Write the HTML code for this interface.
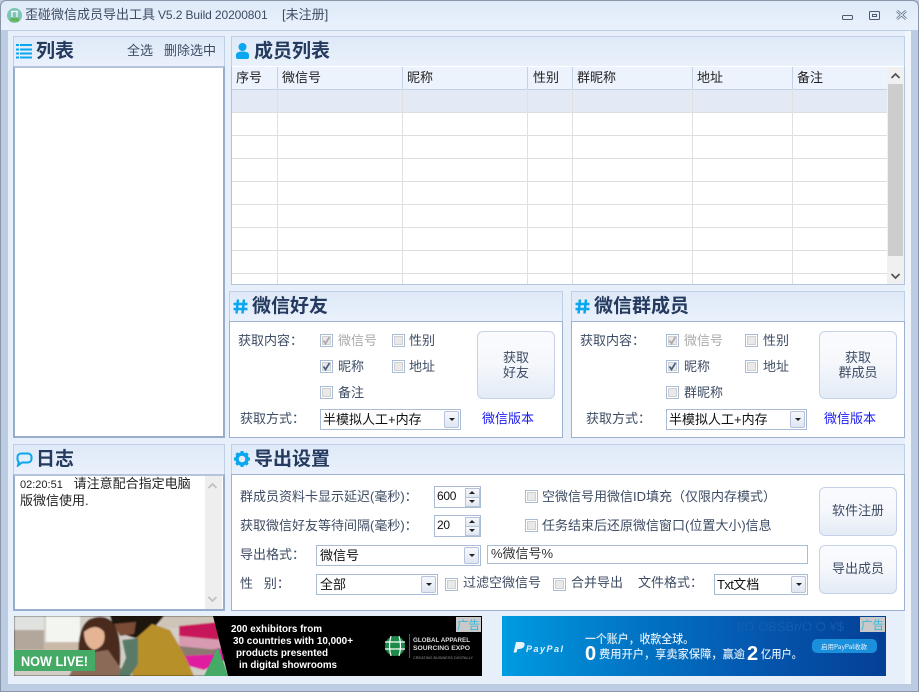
<!DOCTYPE html>
<html><head><meta charset="utf-8">
<style>
html,body{margin:0;padding:0}
body{width:919px;height:692px;overflow:hidden;position:relative;background:#bccde3;font-family:"Liberation Sans","Noto Sans CJK SC",sans-serif;font-size:13px;color:#3d4c63}
div,span,svg{position:absolute;box-sizing:border-box}
span.i{position:static}
.t{white-space:nowrap;line-height:18px;height:18px}
.h{font-size:19px;font-weight:700;color:#243a5e;line-height:28px;height:28px;white-space:nowrap}
.ph{background:linear-gradient(#dfe9f7,#e9f1fc);border:1px solid #bfcfe6}
.pb{background:#fff;border:1px solid #9db0cf}
.b{background:linear-gradient(#fafbfe 0%,#f6f8fc 45%,#e3ebf6 100%);border:1px solid #c5d2e8;border-radius:6px;text-align:center;color:#3d4c63;line-height:15px}
.c{width:13px;height:13px;border:1px solid #aabbd6;background:#fff}
.c:after{content:"";position:absolute;left:1px;top:1px;width:9px;height:9px;background:#e9e9e9;border:1px solid #d0d0d0;box-sizing:border-box}
.c svg{left:0;top:0;z-index:2}
.s{background:#fff;border:1px solid #aabbd6;color:#111;line-height:19px;padding-left:2px;white-space:nowrap}
.d{right:1px;top:1px;width:15px;height:17px;background:linear-gradient(#f6f8fc,#dfe6f2);border:1px solid #b6c3da;border-radius:2px}
.d:after{content:"";position:absolute;left:4px;top:6px;border-left:3px solid transparent;border-right:3px solid transparent;border-top:3px solid #222}
.col{top:67px;width:1px;height:217px;background:#e0e0e0}
.hc{top:67px;width:1px;height:22px;background:#c3d0e6}
.row{left:232px;width:655px;height:1px;background:#dedede}
.tb{color:#222}
.sp{width:15px;height:10px;left:30px;background:linear-gradient(#f6f8fc,#dfe6f2);border:1px solid #b6c3da}
.sp:after{content:"";position:absolute;left:3px;top:2px;border-left:3px solid transparent;border-right:3px solid transparent}
.up:after{border-bottom:3px solid #222}
.dn:after{border-top:3px solid #222}
</style></head><body>
<!-- frame -->
<div style="left:0;top:0;width:919px;height:692px;border:1px solid #8a97a8;border-radius:6px 6px 0 0;background:#bccde3"></div>
<div style="left:1px;top:1px;width:917px;height:29px;background:linear-gradient(#dfeaf8,#e9f1fc);border-radius:6px 6px 0 0"></div>
<div style="left:8px;top:31px;width:903px;height:653px;background:#e7effa"></div>
<div style="left:905px;top:31px;width:6px;height:653px;background:#f1f6fd"></div>
<!-- title -->
<svg style="left:7px;top:8px" width="15" height="15" viewBox="0 0 15 15"><circle cx="7.5" cy="7.5" r="7.5" fill="#7cc4b4"/><path d="M4 3.5h7M5 4v5M10 4v5" stroke="#fff" stroke-width="1.2" fill="none"/><rect x="3" y="10" width="9" height="3.5" rx="1" fill="#62b35a"/></svg>
<div class="t" style="left:25px;top:6px;font-size:13px;line-height:18px">歪碰微信成员导出工具</div>
<div class="t" style="left:158px;top:6px;font-size:12px;letter-spacing:-.1px">V5.2 Build 20200801</div>
<div class="t" style="left:282px;top:6px;font-size:13px">[未注册]</div>
<svg style="left:840px;top:8px" width="70" height="16" viewBox="0 0 70 16" fill="none" stroke="#4a5a70"><rect x="2.5" y="7.5" width="10" height="4" rx="1" stroke-width="1"/><rect x="29.5" y="3.5" width="10" height="8" rx="1" stroke-width="1"/><rect x="32.5" y="6.5" width="4" height="2"/><path d="M57 3l9 8M66 3l-9 8" stroke-width="2.6" stroke="#67768a"/><path d="M57 3l9 8M66 3l-9 8" stroke-width="1" stroke="#e8effa"/></svg>

<!-- list panel -->
<div class="ph" style="left:13px;top:36px;width:212px;height:31px"></div>
<svg style="left:16px;top:43px" width="17" height="16" viewBox="0 0 17 16" fill="#0aa6ee"><rect x="0" y="1" width="3" height="2"/><rect x="0" y="5.5" width="3" height="2"/><rect x="0" y="9.5" width="3" height="2"/><rect x="0" y="13.5" width="3" height="2"/><rect x="4" y="1" width="12" height="2"/><rect x="4" y="5.5" width="12" height="2"/><rect x="4" y="9.5" width="12" height="2"/><rect x="4" y="13.5" width="12" height="2"/></svg>
<div class="h" style="left:36px;top:38px">列表</div>
<div class="t" style="left:127px;top:42px">全选</div>
<div class="t" style="left:164px;top:42px">删除选中</div>
<div style="left:13px;top:66px;width:212px;height:372px;background:#fff;border:2px solid #98accb;border-top-color:#b5c4dc"></div>

<!-- members -->
<div class="ph" style="left:231px;top:36px;width:674px;height:31px"></div>
<svg style="left:236px;top:43px" width="13" height="17" viewBox="0 0 13 17" fill="#0aa6ee"><circle cx="6.5" cy="4" r="4"/><path d="M0 14v-2c0-2.500 2.500-3.500 6.500-3.500S13 9.500 13 12v2q0 2-2 2H2q-2 0-2-2z"/></svg>
<div class="h" style="left:254px;top:38px">成员列表</div>
<div style="left:231px;top:66px;width:674px;height:219px;background:#fff;border:1px solid #b4c3dc;border-top:0"></div>
<div style="left:232px;top:67px;width:655px;height:22px;background:#ecf3fd"></div>
<div style="left:232px;top:89px;width:655px;height:1px;background:#c3d0e6"></div>
<div style="left:232px;top:90px;width:655px;height:22px;background:#e3eaf5"></div>
<div class="row" style="top:112px"></div><div class="row" style="top:135px"></div><div class="row" style="top:158px"></div><div class="row" style="top:181px"></div><div class="row" style="top:204px"></div><div class="row" style="top:227px"></div><div class="row" style="top:250px"></div><div class="row" style="top:273px"></div>
<div class="col" style="left:277px"></div><div class="col" style="left:402px"></div><div class="col" style="left:527px"></div><div class="col" style="left:572px"></div><div class="col" style="left:692px"></div><div class="col" style="left:792px"></div>
<div class="hc" style="left:277px"></div><div class="hc" style="left:402px"></div><div class="hc" style="left:527px"></div><div class="hc" style="left:572px"></div><div class="hc" style="left:692px"></div><div class="hc" style="left:792px"></div>
<div class="t tb" style="left:236px;top:69px">序号</div><div class="t tb" style="left:282px;top:69px">微信号</div><div class="t tb" style="left:407px;top:69px">昵称</div><div class="t tb" style="left:533px;top:69px">性别</div><div class="t tb" style="left:577px;top:69px">群昵称</div><div class="t tb" style="left:697px;top:69px">地址</div><div class="t tb" style="left:797px;top:69px">备注</div>
<!-- scrollbar -->
<div style="left:887px;top:67px;width:17px;height:217px;background:#f0f0f0"></div>
<div style="left:888px;top:84px;width:15px;height:172px;background:#cdcdcd"></div>
<svg style="left:890px;top:72px" width="11" height="8" viewBox="0 0 11 8"><path d="M1.500 6L5.500 2L9.500 6" fill="none" stroke="#555" stroke-width="1.800"/></svg>
<svg style="left:890px;top:272px" width="11" height="8" viewBox="0 0 11 8"><path d="M1.500 2L5.500 6L9.500 2" fill="none" stroke="#555" stroke-width="1.800"/></svg>

<!-- friends -->
<div class="ph" style="left:229px;top:291px;width:334px;height:31px"></div>
<svg style="left:233px;top:299px" width="15" height="15" viewBox="0 0 15 15"><path d="M5 .5L3.500 14.500M11 .5L9.500 14.500M.5 5h14M.5 10h14" stroke="#0aa6ee" stroke-width="2.500" fill="none"/></svg>
<div class="h" style="left:252px;top:293px">微信好友</div>
<div class="pb" style="left:229px;top:321px;width:334px;height:117px"></div>
<div class="t" style="left:238px;top:332px">获取内容：</div>
<div class="c" style="left:320px;top:334px"><svg width="11" height="11" viewBox="0 0 11 11"><path d="M2.500 5.500L4.500 8.500L8.500 2" fill="none" stroke="#a8a8a8" stroke-width="1.700"/></svg></div>
<div class="t" style="left:338px;top:332px;color:#aaa">微信号</div>
<div class="c" style="left:392px;top:334px"></div><div class="t" style="left:409px;top:332px">性别</div>
<div class="c" style="left:320px;top:360px"><svg width="11" height="11" viewBox="0 0 11 11"><path d="M2.500 5.500L4.500 8.500L8.500 2" fill="none" stroke="#4a5f85" stroke-width="1.700"/></svg></div>
<div class="t" style="left:338px;top:358px">昵称</div>
<div class="c" style="left:392px;top:360px"></div><div class="t" style="left:409px;top:358px">地址</div>
<div class="c" style="left:320px;top:386px"></div><div class="t" style="left:338px;top:384px">备注</div>
<div class="b" style="left:477px;top:331px;width:78px;height:68px;padding-top:18px">获取<br>好友</div>
<div class="t" style="left:240px;top:410px">获取方式：</div>
<div class="s" style="left:320px;top:409px;width:141px;height:21px">半模拟人工+内存<div class="d"></div></div>
<div class="t" style="left:482px;top:410px;color:#1c1cf0">微信版本</div>

<!-- group -->
<div class="ph" style="left:571px;top:291px;width:334px;height:31px"></div>
<svg style="left:575px;top:299px" width="15" height="15" viewBox="0 0 15 15"><path d="M5 .5L3.500 14.500M11 .5L9.500 14.500M.5 5h14M.5 10h14" stroke="#0aa6ee" stroke-width="2.500" fill="none"/></svg>
<div class="h" style="left:594px;top:293px">微信群成员</div>
<div class="pb" style="left:571px;top:321px;width:334px;height:117px"></div>
<div class="t" style="left:580px;top:332px">获取内容：</div>
<div class="c" style="left:666px;top:334px"><svg width="11" height="11" viewBox="0 0 11 11"><path d="M2.500 5.500L4.500 8.500L8.500 2" fill="none" stroke="#a8a8a8" stroke-width="1.700"/></svg></div>
<div class="t" style="left:684px;top:332px;color:#aaa">微信号</div>
<div class="c" style="left:745px;top:334px"></div><div class="t" style="left:763px;top:332px">性别</div>
<div class="c" style="left:666px;top:360px"><svg width="11" height="11" viewBox="0 0 11 11"><path d="M2.500 5.500L4.500 8.500L8.500 2" fill="none" stroke="#4a5f85" stroke-width="1.700"/></svg></div>
<div class="t" style="left:684px;top:358px">昵称</div>
<div class="c" style="left:745px;top:360px"></div><div class="t" style="left:763px;top:358px">地址</div>
<div class="c" style="left:666px;top:386px"></div><div class="t" style="left:684px;top:384px">群昵称</div>
<div class="b" style="left:819px;top:331px;width:78px;height:68px;padding-top:18px">获取<br>群成员</div>
<div class="t" style="left:586px;top:410px">获取方式：</div>
<div class="s" style="left:666px;top:409px;width:141px;height:21px">半模拟人工+内存<div class="d"></div></div>
<div class="t" style="left:824px;top:410px;color:#1c1cf0">微信版本</div>

<!-- log -->
<div class="ph" style="left:13px;top:444px;width:212px;height:31px"></div>
<svg style="left:16px;top:452px" width="17" height="15" viewBox="0 0 17 15"><path d="M5 1.500h7a3.500 3.500 0 0 1 3.500 3.500v2a3.500 3.500 0 0 1-3.500 3.500H6L2 13.500l.8-3.500Q1.500 9 1.500 7V5A3.500 3.500 0 0 1 5 1.500z" fill="none" stroke="#0aa6ee" stroke-width="2"/></svg>
<div class="h" style="left:36px;top:446px">日志</div>
<div style="left:13px;top:474px;width:212px;height:137px;background:#fff;border:2px solid #98accb;border-top-color:#b5c4dc"></div>
<div style="left:20px;top:476px;width:186px;line-height:16px;font-size:13px;color:#222;white-space:nowrap"><span class="i" style="font-size:11px">02:20:51</span> &nbsp; 请注意配合指定电脑<br>版微信使用.</div>
<div style="left:205px;top:476px;width:17px;height:133px;background:#eee"></div>
<svg style="left:207px;top:482px" width="11" height="8" viewBox="0 0 11 8"><path d="M1.500 6L5.500 2L9.500 6" fill="none" stroke="#c0c0c0" stroke-width="1.800"/></svg>
<svg style="left:207px;top:595px" width="11" height="8" viewBox="0 0 11 8"><path d="M1.500 2L5.500 6L9.500 2" fill="none" stroke="#c0c0c0" stroke-width="1.800"/></svg>

<!-- export -->
<div class="ph" style="left:231px;top:444px;width:674px;height:31px"></div>
<svg style="left:234px;top:451px" width="16" height="16" viewBox="0 0 16 16"><circle cx="8" cy="8" r="5" fill="none" stroke="#0aa6ee" stroke-width="3.400"/><g stroke="#0aa6ee" stroke-width="3"><path d="M8 0v3M8 13v3M0 8h3M13 8h3M2.300 2.300l2 2M11.700 11.700l2 2M13.700 2.300l-2 2M4.300 11.700l-2 2"/></g></svg>
<div class="h" style="left:254px;top:446px">导出设置</div>
<div class="pb" style="left:231px;top:474px;width:674px;height:137px"></div>
<div class="t" style="left:240px;top:488px">群成员资料卡显示延迟(毫秒)：</div>
<div class="t" style="left:240px;top:517px">获取微信好友等待间隔(毫秒)：</div>
<div class="t" style="left:240px;top:546px">导出格式：</div>
<div class="t" style="left:240px;top:575px">性 &nbsp; 别：</div>
<div class="s" style="left:434px;top:486px;width:47px;height:22px;font-size:12px;letter-spacing:-.3px">600<div class="sp up" style="top:1px"></div><div class="sp dn" style="top:10px"></div></div>
<div class="s" style="left:434px;top:515px;width:47px;height:22px;font-size:12px;letter-spacing:-.3px">20<div class="sp up" style="top:1px"></div><div class="sp dn" style="top:10px"></div></div>
<div class="s" style="left:316px;top:545px;width:165px;height:21px;padding-left:3px">微信号<div class="d"></div></div>
<div class="s" style="left:316px;top:574px;width:122px;height:21px;padding-left:3px">全部<div class="d"></div></div>
<div class="s" style="left:487px;top:545px;width:321px;height:19px;line-height:16px;padding-left:3px;color:#333">%微信号%</div>
<div class="c" style="left:525px;top:490px"></div><div class="t" style="left:542px;top:488px">空微信号用微信ID填充（仅限内存模式）</div>
<div class="c" style="left:525px;top:519px"></div><div class="t" style="left:542px;top:517px">任务结束后还原微信窗口(位置大小)信息</div>
<div class="c" style="left:445px;top:578px"></div><div class="t" style="left:463px;top:574px">过滤空微信号</div>
<div class="c" style="left:553px;top:578px"></div><div class="t" style="left:571px;top:574px">合并导出</div>
<div class="t" style="left:638px;top:574px">文件格式：</div>
<div class="s" style="left:714px;top:574px;width:94px;height:21px;padding-left:2px"><span class="i" style="letter-spacing:-.6px">Txt</span>文档<div class="d"></div></div>
<div class="b" style="left:819px;top:487px;width:78px;height:49px;line-height:45px">软件注册</div>
<div class="b" style="left:819px;top:545px;width:78px;height:49px;line-height:45px">导出成员</div>

<!-- ad 1 -->
<svg style="left:14px;top:616px" width="468" height="60" viewBox="0 0 468 60">
<defs><filter id="bl"><feGaussianBlur stdDeviation="0.8"/></filter><clipPath id="cp"><path d="M0 0H199L214 60H0z"/></clipPath></defs>
<rect width="468" height="60" fill="#000"/>
<g clip-path="url(#cp)"><g filter="url(#bl)">
<rect width="215" height="60" fill="#d3cfc8"/>
<rect x="0" y="0" width="30" height="14" fill="#dfe2de"/>
<rect x="32" y="0" width="34" height="26" fill="#f3f5f1"/>
<rect x="0" y="14" width="30" height="20" fill="#b3a79b"/>
<rect x="30" y="26" width="36" height="10" fill="#cbb9a8"/>
<rect x="145" y="0" width="60" height="12" fill="#cfc4b8"/>
<path d="M165 10L205 6V24L165 20z" fill="#c8145a"/>
<path d="M165 20L208 24V34L165 30z" fill="#d89ab0"/>
<path d="M168 38L208 32L212 44L190 54L175 50z" fill="#e01ca0"/>
<path d="M165 30L205 34V38L168 40z" fill="#8a7a70"/>
<path d="M66 58Q60 12 76 3Q92-3 100 8Q108 20 106 50z" fill="#4a2a1c"/>
<path d="M70 16Q82 6 90 16Q93 30 80 34Q70 30 70 16z" fill="#e4b494"/>
<path d="M55 60L66 38L94 34L112 60z" fill="#8c6a58"/>
<path d="M96 0H150L140 12L122 22Q100 18 96 0z" fill="#1c1410"/>
<path d="M100 8L122 6L120 18L106 20z" fill="#7a4c34"/>
<path d="M118 60L120 24L138 8L156 14L170 38L180 60z" fill="#b8902c"/>
<path d="M108 24L124 22L124 48L116 60H104L112 42z" fill="#5a7a68"/>
</g></g>
<path d="M204 31L214 60H190z" fill="#44aa66"/>
<rect y="34" width="81" height="21" fill="#44aa66"/>
<text x="7" y="50" font-family="Liberation Sans" font-weight="700" font-size="14" fill="#fff" textLength="67" lengthAdjust="spacingAndGlyphs">NOW LIVE!</text>
<g font-family="Liberation Sans" font-weight="700" font-size="10.500" fill="#fff">
<text x="217" y="16" textLength="91" lengthAdjust="spacingAndGlyphs">200 exhibitors from</text>
<text x="219" y="28" textLength="120" lengthAdjust="spacingAndGlyphs">30 countries with 10,000+</text>
<text x="222" y="40" textLength="92" lengthAdjust="spacingAndGlyphs">products presented</text>
<text x="225" y="52" textLength="98" lengthAdjust="spacingAndGlyphs">in digital showrooms</text>
</g>
<circle cx="381" cy="30" r="10" fill="#1c8a48"/>
<path d="M371 26h20M371 33h20M377 20q-3 10 0 20M385 20q3 10 0 20" stroke="#fff" stroke-width="1.200" fill="none"/>
<rect x="395" y="18" width="1" height="24" fill="#555"/>
<g font-family="Liberation Sans" font-weight="700" fill="#ddd">
<text x="399" y="26" font-size="6.500" textLength="57" lengthAdjust="spacingAndGlyphs">GLOBAL APPAREL</text>
<text x="399" y="34" font-size="6.500" textLength="57" lengthAdjust="spacingAndGlyphs">SOURCING EXPO</text>
<text x="399" y="43" font-size="4" font-weight="400" fill="#999" textLength="60" lengthAdjust="spacingAndGlyphs">CREATING BUSINESS DIGITALLY</text>
</g>
<rect x="442" y="1" width="25" height="15" fill="#c9c9c9"/>
<text x="443" y="13" font-family="Noto Sans CJK SC" font-size="11.500" fill="#35b8dc">广告</text>
</svg>

<!-- ad 2 -->
<svg style="left:502px;top:616px" width="384" height="60" viewBox="0 0 384 60">
<defs><linearGradient id="g" x1="0" x2="1" y1="0" y2="0"><stop offset="0" stop-color="#009be0"/><stop offset=".35" stop-color="#0274c4"/><stop offset=".7" stop-color="#0454ac"/><stop offset="1" stop-color="#053f96"/></linearGradient></defs>
<rect width="384" height="60" fill="url(#g)"/>
<text x="235" y="15" font-family="Liberation Sans" font-size="13" fill="#1a62b4" opacity=".7">I/O OBSBr/O O ¥$</text>
<path d="M14 26h5q4.500 0 3.500 3.500t-5.500 3.500h-1.500l-1 3.500h-3z" fill="#e8f4fc"/>
<text x="24" y="36" font-family="Liberation Sans" font-weight="700" font-style="italic" font-size="9" fill="#e8f4fc" textLength="37">PayPal</text>
<g fill="#dcecf8">
<text x="83" y="27" font-size="12" font-family="Noto Sans CJK SC" font-weight="500" textLength="109" lengthAdjust="spacingAndGlyphs">一个账户，收款全球。</text>
<text x="83" y="44" font-size="20" font-family="Liberation Sans" font-weight="700" fill="#fff">0</text>
<text x="97" y="42" font-size="11.500" font-family="Noto Sans CJK SC" font-weight="500" textLength="146" lengthAdjust="spacingAndGlyphs">费用开户，享卖家保障，赢逾</text>
<text x="245" y="44" font-size="20" font-family="Liberation Sans" font-weight="700" fill="#fff">2</text>
<text x="259" y="42" font-size="11.500" font-family="Noto Sans CJK SC" font-weight="500" textLength="41" lengthAdjust="spacingAndGlyphs">亿用户。</text>
</g>
<rect x="310" y="23" width="65" height="14" rx="5" fill="#1a90dc"/>
<text x="319" y="33" font-family="Noto Sans CJK SC" font-size="6.500" fill="#e8f4fc">启用PayPal收款</text>
<rect x="358" y="1" width="25" height="15" fill="#c9c9c9"/>
<text x="359" y="13" font-family="Noto Sans CJK SC" font-size="11.500" fill="#35b8dc">广告</text>
</svg>
</body></html>
